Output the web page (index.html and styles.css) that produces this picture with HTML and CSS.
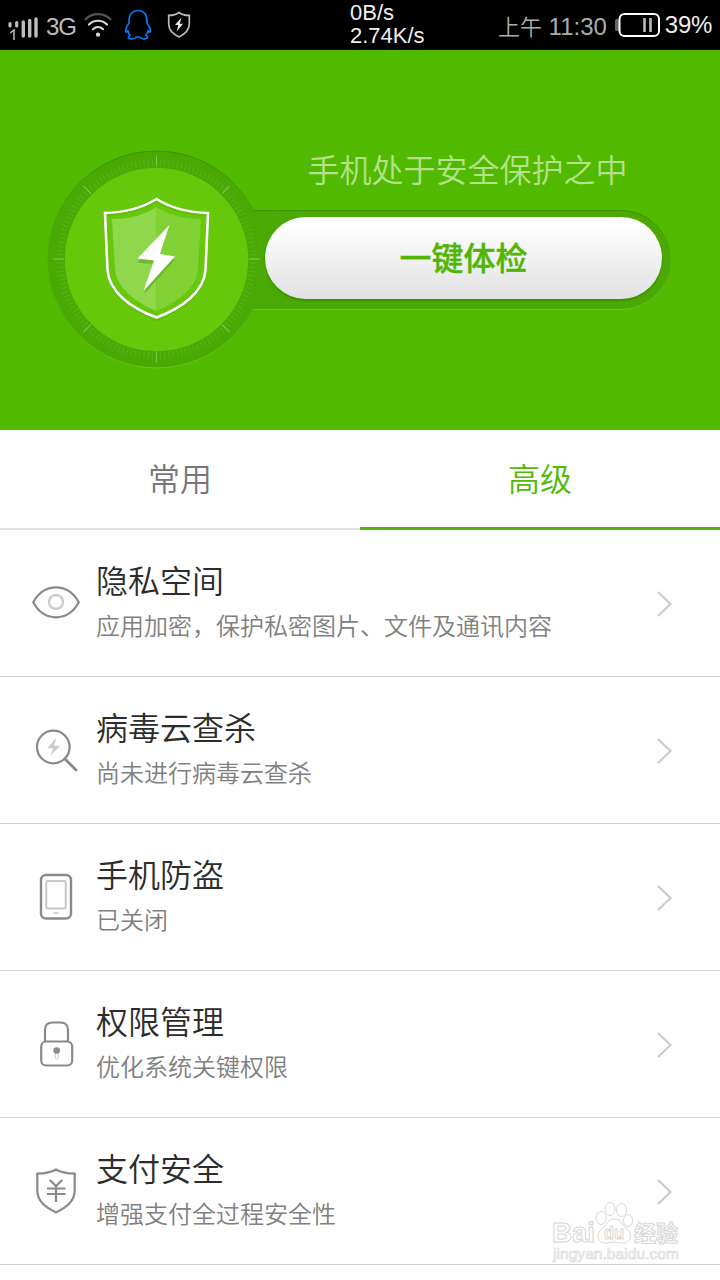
FILE: index.html
```html
<!DOCTYPE html>
<html lang="zh-CN">
<head>
<meta charset="utf-8">
<title>手机安全</title>
<link rel="stylesheet" href="styles.css">
</head>
<body>
<header class="status">
  <div class="status-left">
    <svg class="signal" width="30" height="26" viewBox="0 0 30 26" fill="none" stroke="#bdbdbd" stroke-linecap="round">
      <path d="M2 9.500v2.500M8.700 8.500v3.500" stroke-width="3.200"/>
      <path d="M2.800 18.500L6 16v9.500" stroke-width="1.500"/>
      <path d="M15.300 8v14M21.700 6.500v15.500M28 5v17" stroke-width="3.400"/>
    </svg>
    <span class="network">3G</span>
    <svg class="wifi" width="28" height="26" viewBox="0 0 28 26" fill="none" stroke="#d8d8d8" stroke-width="2.200" stroke-linecap="round">
      <path d="M1.500 6.200C8.500 -.5 19.500 -.5 26.500 6.200" stroke="#555"/>
      <path d="M5 11.500c5-5 13-5 18 0M9 16.200c3-2.900 7-2.900 10 0"/>
      <circle cx="14" cy="21.700" r="2.100" fill="#d8d8d8" stroke="none"/>
    </svg>
    <svg class="penguin" width="28" height="32" viewBox="0 0 28 32" fill="none" stroke="#0878f0" stroke-width="1.700" stroke-linejoin="round">
      <path d="M5 14C4.500 6 8 1.500 14 1.500S23.500 6 23 14C25 17 27 20 26.300 22.700c-.8 1-1.700-.6-2.300-1-.2 2-1 3.500-2 4.700 2.500 1.500 2.300 3-.2 3.300-2.800.5-5-.3-6.300-1.700h-3c-1.500 1.500-4 2.200-6.500 1.700-2.300-.3-2.300-1.800 0-3.300-1.200-1.200-1.800-2.700-2-4.700-.8.400-1.500 2-2.300 1C1 20 3 17 5 14z"/>
    </svg>
    <svg class="guard" width="24" height="28" viewBox="0 0 24 28">
      <path d="M12 1.500C15 3.800 18 4.500 22.300 4.400V13c0 6-4.500 10-10.300 13C6 23 1.700 19 1.700 13V4.400C6 4.500 9 3.800 12 1.500z" fill="none" stroke="#bbb" stroke-width="1.700"/>
      <path d="M14.500 6.500L8 14h3.300L9.700 20.500 16 12.700h-3.300z" fill="#eee"/>
    </svg>
  </div>
  <div class="traffic"><span>0B/s</span><span>2.74K/s</span></div>
  <div class="status-right">
    <span class="clock"><span class="ampm">上午</span> 11:30</span>
    <svg class="battery" width="46" height="26" viewBox="0 0 46 26">
      <rect x="0" y="7" width="4" height="12" rx="1.500" fill="#666"/>
      <rect x="4.500" y="2" width="39.500" height="22" rx="5" fill="#000" stroke="#fff" stroke-width="2"/>
      <path d="M29.500 6v14M35.500 6v14" stroke="#bbb" stroke-width="2.600"/>
    </svg>
    <span class="percent">39%</span>
  </div>
</header>

<section class="hero">
  <svg class="dial" width="720" height="380" viewBox="0 50 720 380">
    <defs>
      <linearGradient id="rim" gradientUnits="userSpaceOnUse" x1="0" y1="150" x2="0" y2="369">
        <stop offset="0" stop-color="#3c9201"/><stop offset=".4" stop-color="#4ba903"/>
        <stop offset=".6" stop-color="#4ba903"/><stop offset="1" stop-color="#68c51e"/>
      </linearGradient>
      <linearGradient id="slot" gradientUnits="userSpaceOnUse" x1="0" y1="210" x2="0" y2="310">
        <stop offset="0" stop-color="#3c9201"/><stop offset=".4" stop-color="#4ba903"/>
        <stop offset=".6" stop-color="#4ba903"/><stop offset="1" stop-color="#68c51e"/>
      </linearGradient>
    </defs>
    <rect x="200" y="210.500" width="470.500" height="99" rx="49.500" fill="#4ba903" stroke="url(#slot)"/>
    <circle cx="156.500" cy="259.500" r="108.500" fill="#4ba903" stroke="url(#rim)"/>
    <rect x="240" y="212" width="30" height="96" fill="#4ba903"/>
    <circle cx="156.500" cy="259" r="96.500" fill="none" stroke="#5bb11c" stroke-width="7" pathLength="1440" stroke-dasharray="2.500 7.500" stroke-dashoffset="1.250"/>
    <circle cx="156.500" cy="259" r="98" fill="none" stroke="#86c755" stroke-width="11" pathLength="800" stroke-dasharray="1.200 98.800" stroke-dashoffset=".6"/>
    <circle cx="156.500" cy="259.500" r="91.700" fill="#67c70b"/>
    <path d="M156.500 198.500C170 207.500 187 212.500 208 213L205.500 270C204 292 182 308 156.500 318C131 308 109 292 107.500 270L105 213C126 212.500 143 207.500 156.500 198.500z" fill="none" stroke="#4fa908" stroke-width="3" opacity=".4" transform="translate(0 1.500)"/>
    <path d="M156.500 199C170 207.500 187 212.500 208 213L205.500 270C204 292 182 308 156.500 317.500C131 308 109 292 107.500 270L105 213C126 212.500 143 207.500 156.500 199z" fill="none" stroke="#fff" stroke-width="2.600"/>
    <path d="M156.500 207C145 214.500 130 219 112 219L115 270C117 288 135 302 156.500 311z" fill="#8fd74d"/>
    <path d="M156.500 207C168 214.500 183 219 201 219L198 270C196 288 178 302 156.500 311z" fill="#82d135"/>
    <path d="M169 227L137.500 262.500 153.500 264.500 144 294.500 175 259.500 159 257.500z" fill="#62ad20" opacity=".7"/>
    <path d="M169.500 225L137.500 258.500 154 260.500 143.500 291 175 256.500 160 254z" fill="#fff"/>
  </svg>
  <div class="hero-body">
    <p class="hero-status">手机处于安全保护之中</p>
    <button class="check" type="button">一键体检</button>
  </div>
</section>

<nav class="tabs">
  <a class="tab">常用</a>
  <a class="tab active">高级</a>
</nav>

<main class="list">
  <div class="row">
    <svg class="icon" viewBox="0 0 48 48" fill="none" stroke="#8a8a8a" stroke-width="2.200">
      <path d="M1.200 24C12 4 36 4 46.800 24 36 44 12 44 1.200 24z" transform="translate(0 -.7)" stroke-linejoin="round"/>
      <circle cx="24" cy="23" r="7" stroke="#ccc" stroke-width="2.500"/>
    </svg>
    <div class="copy"><h2>隐私空间</h2><p>应用加密，保护私密图片、文件及通讯内容</p></div>
    <svg class="arrow" viewBox="0 0 18 28"><path d="M2 2l12.500 12L2 26"/></svg>
  </div>
  <div class="row">
    <svg class="icon" viewBox="0 0 48 48" fill="none" stroke="#8a8a8a" stroke-width="2.300">
      <circle cx="21.300" cy="21" r="16.300"/>
      <path d="M33 33L44 44" stroke-width="2.800" stroke-linecap="round"/>
      <path d="M24.500 11.500L15.500 22l5.500.5L18.500 29.500 28 20l-6-.5z" fill="#ccc" stroke="none"/>
    </svg>
    <div class="copy"><h2>病毒云查杀</h2><p>尚未进行病毒云查杀</p></div>
    <svg class="arrow" viewBox="0 0 18 28"><path d="M2 2l12.500 12L2 26"/></svg>
  </div>
  <div class="row">
    <svg class="icon" viewBox="0 0 48 48" fill="none" stroke="#8a8a8a" stroke-width="2.400">
      <rect x="9" y="2" width="30" height="43.500" rx="5"/>
      <rect x="14.300" y="8" width="19.400" height="27.500" rx="1.500" stroke="#c8c8c8" stroke-width="2"/>
      <path d="M21.500 40h5" stroke="#bbb" stroke-width="1.300"/>
    </svg>
    <div class="copy"><h2>手机防盗</h2><p>已关闭</p></div>
    <svg class="arrow" viewBox="0 0 18 28"><path d="M2 2l12.500 12L2 26"/></svg>
  </div>
  <div class="row">
    <svg class="icon" viewBox="0 0 48 48" fill="none" stroke="#8a8a8a" stroke-width="2.200">
      <path d="M13 21.500V10q0-7.500 7.500-7.500h8Q36 2.500 36 10v11.500"/>
      <rect x="9.200" y="21.500" width="31" height="24" rx="5"/>
      <path d="M23.300 32v6q1.400 2.500 2.800 0V32" stroke="#ccc" stroke-width="1"/>
      <circle cx="24.700" cy="30.500" r="3.300" fill="#8a8a8a" stroke="none"/>
    </svg>
    <div class="copy"><h2>权限管理</h2><p>优化系统关键权限</p></div>
    <svg class="arrow" viewBox="0 0 18 28"><path d="M2 2l12.500 12L2 26"/></svg>
  </div>
  <div class="row">
    <svg class="icon" viewBox="0 0 48 48" fill="none" stroke="#8a8a8a" stroke-width="2.200">
      <path d="M24 2.500C29 5.500 35.500 6.500 42.700 6.700V23.500C42.700 34.500 34 40.500 24 45.500 14 40.500 5.300 34.500 5.300 23.500V6.700C12.500 6.500 19 5.500 24 2.500z"/>
      <path d="M17.700 13L24 19l6.300-6M15 21.500h18.500M15 27h18.500M24 19V35"/>
    </svg>
    <div class="copy"><h2>支付安全</h2><p>增强支付全过程安全性</p></div>
    <svg class="arrow" viewBox="0 0 18 28"><path d="M2 2l12.500 12L2 26"/></svg>
  </div>
</main>

<svg class="watermark" width="136" height="66" viewBox="0 0 136 66" fill="#fff" stroke="#d6d6d6">
  <text class="brand" x="2" y="44" textLength="43" lengthAdjust="spacingAndGlyphs">Bai</text>
  <ellipse cx="51" cy="20" rx="5" ry="6.500"/>
  <ellipse cx="60" cy="11" rx="5" ry="6.500"/>
  <ellipse cx="71.500" cy="12" rx="5" ry="6.500"/>
  <ellipse cx="78" cy="22.500" rx="4.500" ry="6"/>
  <path d="M64 21c7 0 8 6 13 10 7 5 3 14-4 14-4 0-5-1-9-1s-5 1-9 1c-7 0-10-9-3-14 5-4 6-10 12-10z"/>
  <text class="du" x="54" y="41" textLength="20" lengthAdjust="spacingAndGlyphs">du</text>
  <text class="brand-cn" x="84" y="43" textLength="44">经验</text>
  <text class="url" x="3" y="60.500" textLength="126" lengthAdjust="spacingAndGlyphs">jingyan.baidu.com</text>
</svg>
</body>
</html>
```

FILE: styles.css
```css
* {
  box-sizing: border-box;
}

body {
  margin: 0;
  width: 720px;
  height: 1280px;
  overflow: hidden;
  position: relative;
  background: #fefefe;
  font-family: "Liberation Sans", "Noto Sans CJK SC", sans-serif;
}

h2, p {
  margin: 0;
}

.status {
  display: grid;
  grid-template-columns: 350px 1fr auto;
  height: 50px;
  padding-right: 8px;
  background: #000;
  color: #eee;
}

.status-left {
  display: flex;
  align-items: center;
  padding-left: 8px;
}

.signal {
  margin-top: 3px;
}

.network {
  width: 30px;
  margin-left: 8px;
  font-size: 24px;
  letter-spacing: -1.2px;
  color: #bdbdbd;
  padding-top: 3px;
}

.wifi {
  margin-left: 8px;
  margin-top: 1px;
}

.penguin {
  margin-left: 12px;
}

.guard {
  margin-left: 15px;
}

.traffic {
  display: flex;
  flex-direction: column;
  font-size: 22px;
  line-height: 23px;
  padding-top: 1px;
}

.status-right {
  display: flex;
  align-items: center;
}

.clock {
  font-size: 24px;
  line-height: 30px;
  padding-top: 2px;
  color: #adadad;
}

.ampm {
  font-family: "Noto Sans CJK SC DemiLight", "Noto Sans CJK SC", sans-serif;
  font-size: 22px;
  font-weight: 350;
}

.battery {
  margin-left: 8px;
}

.percent {
  margin-left: 4px;
  font-size: 24px;
  letter-spacing: -.3px;
}

.hero {
  display: grid;
  height: 380px;
  background: #52b901;
}

.dial, .hero-body {
  grid-area: 1 / 1;
}

.hero-body {
  display: flex;
  flex-direction: column;
  align-items: center;
  width: 397px;
  margin-left: 265px;
  padding-top: 94px;
}

.hero-status {
  height: 73px;
  margin-left: 8px;
  font-family: "Noto Sans CJK SC DemiLight", "Noto Sans CJK SC", sans-serif;
  font-size: 32px;
  line-height: 48px;
  font-weight: 350;
  color: #b4e18a;
}

.check {
  width: 397px;
  height: 82px;
  padding: 0 0 5px;
  border: 0;
  border-radius: 41px;
  background: linear-gradient(#fff 10%, #e1e1e1);
  box-shadow: 0 2px 2px #3b9000;
  color: #52b505;
  font-family: "Noto Sans CJK SC", sans-serif;
  font-size: 32px;
  font-weight: 500;
  -webkit-text-stroke: .4px #52b505;
}

.tabs {
  display: grid;
  grid-template-columns: 1fr 1fr;
  height: 100px;
}

.tab {
  height: 100px;
  border-bottom: 2px solid #e2e2e2;
  text-align: center;
  font-family: "Noto Sans CJK SC DemiLight", "Noto Sans CJK SC", sans-serif;
  font-size: 32px;
  font-weight: 350;
  line-height: 95px;
  color: #777;
}

.tab.active {
  border-bottom: 3px solid #52b90b;
  color: #52b90b;
}

.row {
  display: flex;
  align-items: center;
  height: 147px;
  padding: 0 46px 0 32px;
  border-bottom: 1px solid #d2d2d2;
}

.icon {
  width: 48px;
  height: 48px;
  flex: none;
}

.copy {
  flex: 1;
  margin-left: 16px;
  padding-bottom: 8px;
  font-family: "Noto Sans CJK SC DemiLight", "Noto Sans CJK SC", sans-serif;
  font-weight: 350;
}

.copy h2 {
  font-size: 32px;
  line-height: 48px;
  font-weight: 350;
  color: #2c2c2c;
}

.copy p {
  margin-top: 4px;
  font-size: 24px;
  line-height: 36px;
  color: #808080;
}

.arrow {
  width: 18px;
  height: 28px;
  margin-top: 1px;
  flex: none;
  fill: none;
  stroke: #ccc;
  stroke-width: 2.2;
}

.watermark {
  position: absolute;
  left: 550px;
  top: 1198px;
  stroke-width: 1;
}

.brand {
  font: 700 28px "Liberation Sans", sans-serif;
}

.du {
  font: 700 19px "Liberation Sans", sans-serif;
}

.brand-cn {
  font: 700 22px "Noto Sans CJK SC", sans-serif;
}

.url {
  font: 14px "Liberation Sans", sans-serif;
  stroke-width: .6;
}
```
